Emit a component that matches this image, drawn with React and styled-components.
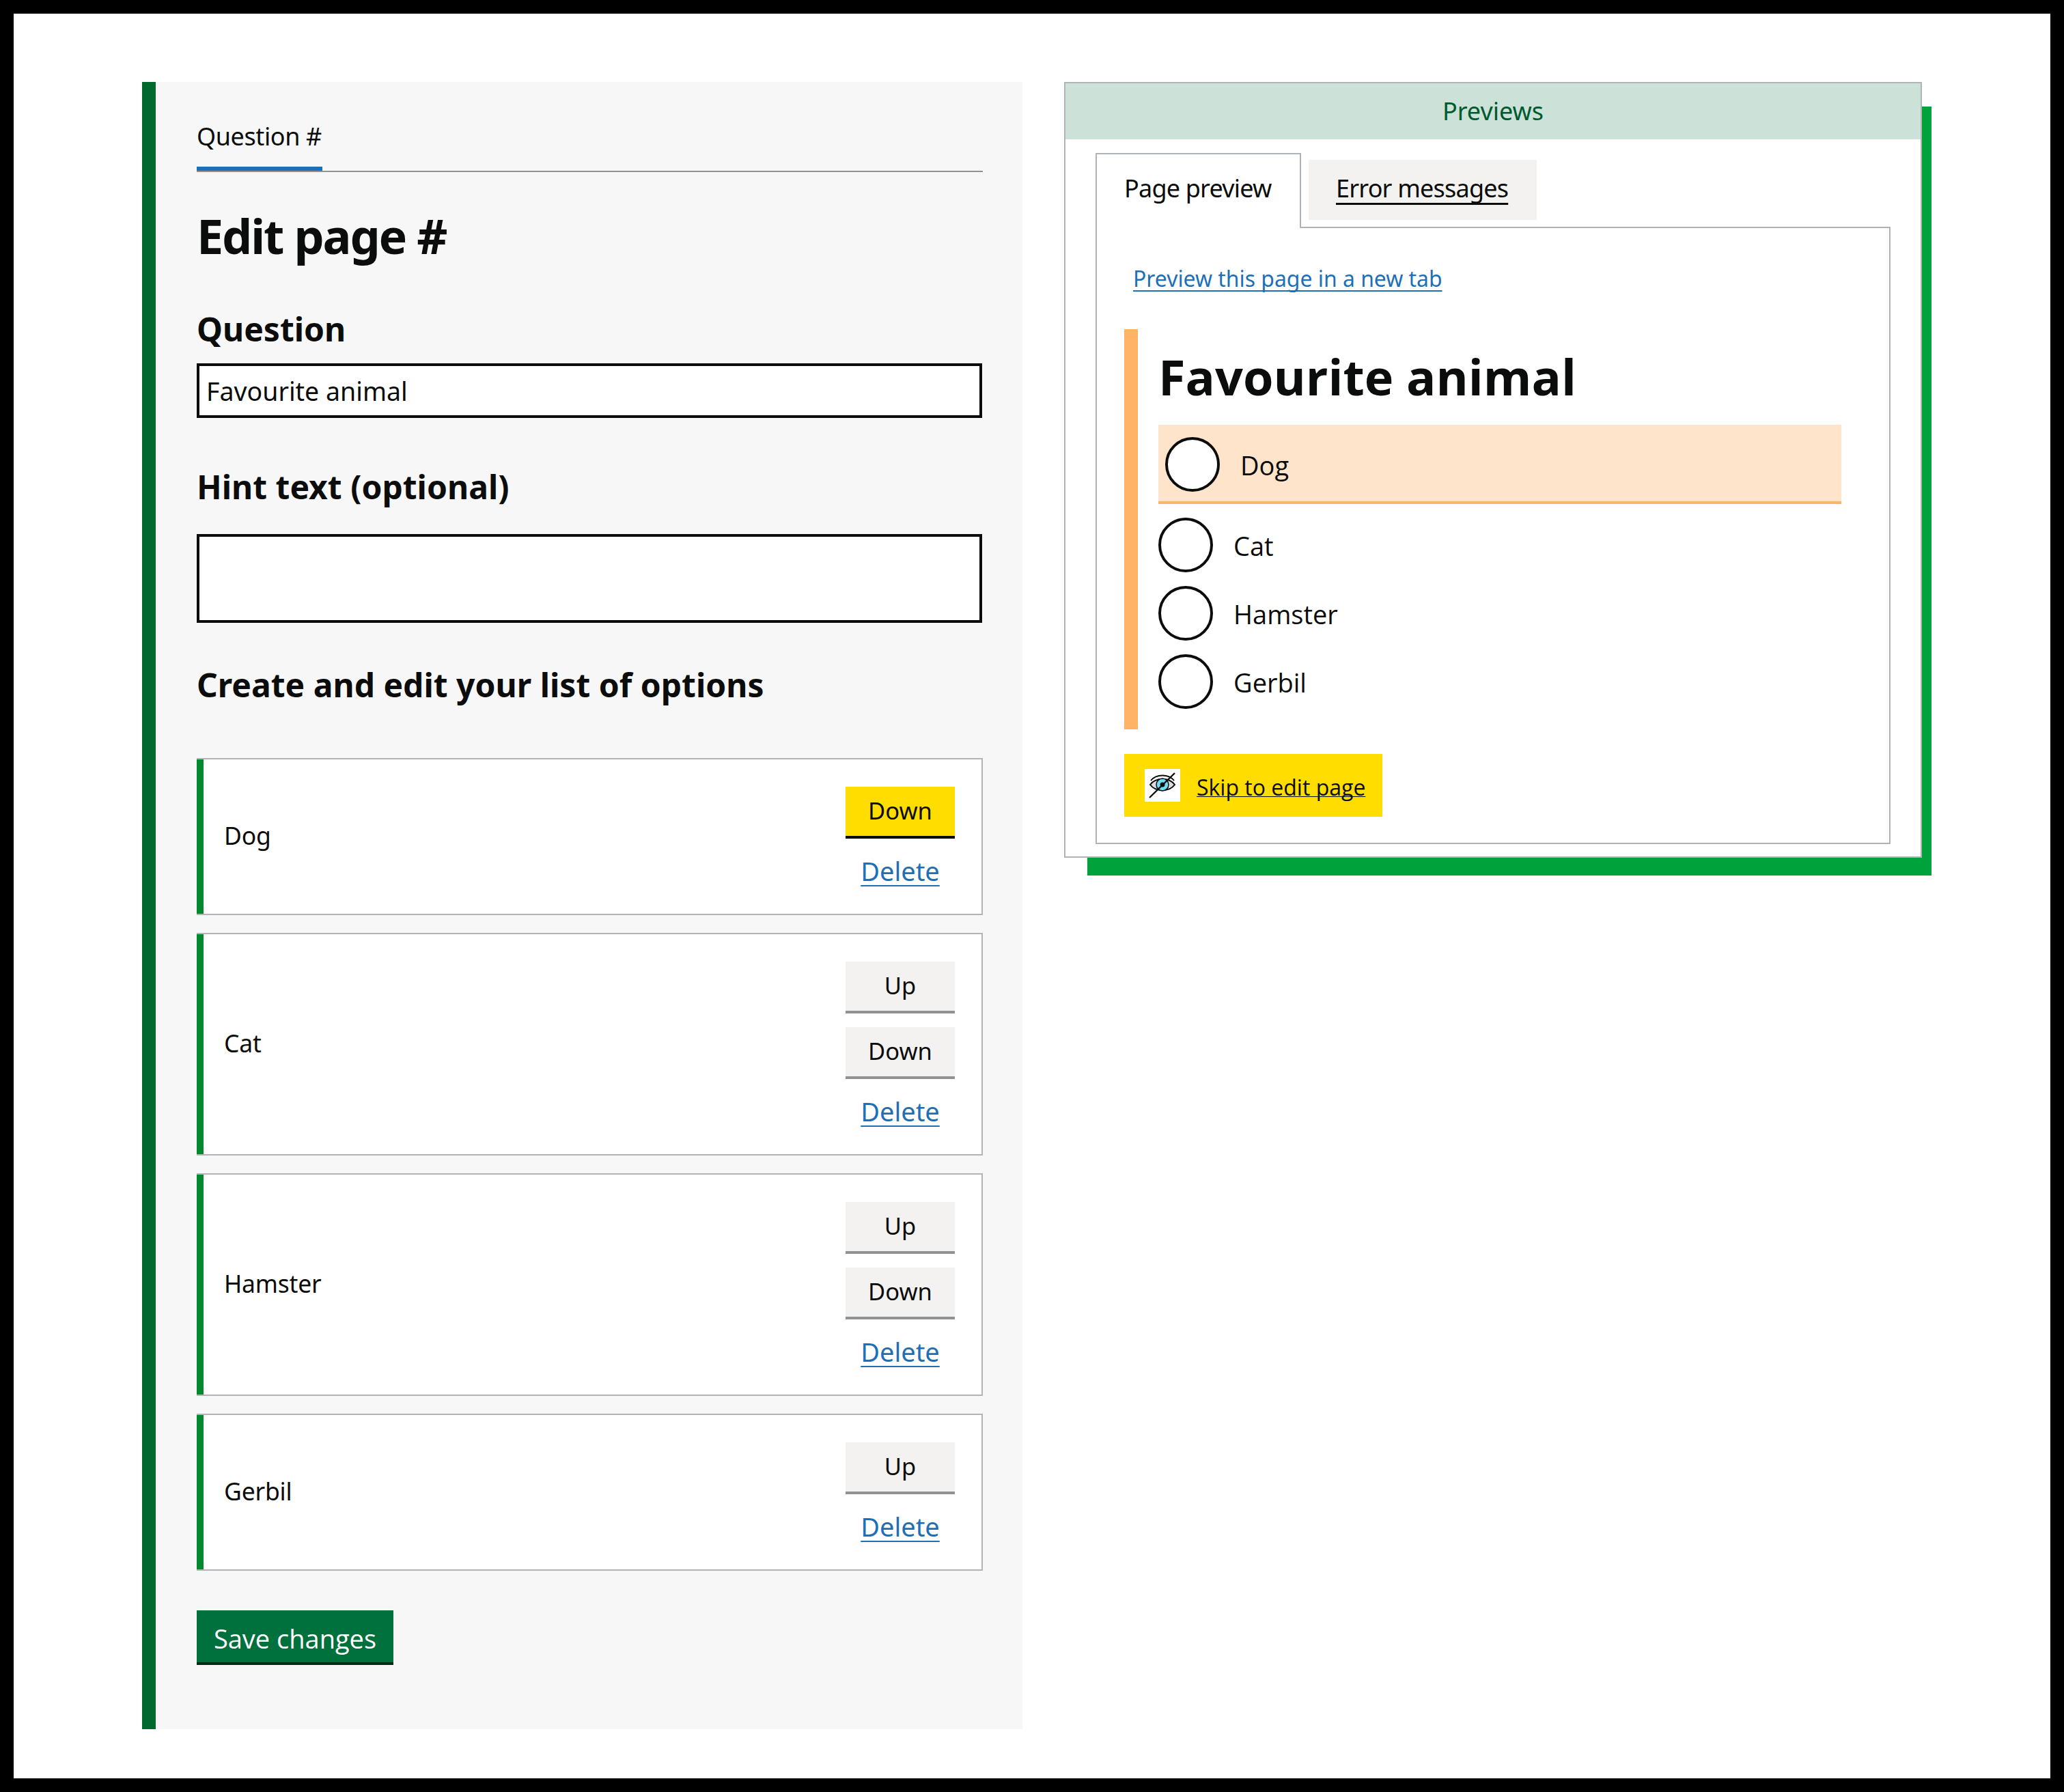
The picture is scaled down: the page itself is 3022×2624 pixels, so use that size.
import React from "react";
import styled, { createGlobalStyle } from "styled-components";

const Global = createGlobalStyle`
  html, body { margin: 0; padding: 0; background: #fff; }
  * { box-sizing: border-box; }
  a { text-decoration-skip-ink: none; }
`;

const Frame = styled.div`
  width: 3022px;
  height: 2624px;
  border: 20px solid #000;
  background: #fff;
  padding: 100px 0 0 188px;
  display: flex;
  align-items: flex-start;
  gap: 61px;
  font-family: "Noto Sans", sans-serif;
  color: #0b0c0c;
`;

const EditorPanel = styled.section`
  width: 1289px;
  height: 2412px;
  background: #f7f7f7;
  border-left: 20px solid #00692e;
  padding: 0 58px 0 60px;
  display: flex;
  flex-direction: column;
`;

const TabBar = styled.div`
  height: 132px;
  border-bottom: 2px solid #929191;
  display: flex;
  align-items: flex-end;
`;

const TabLabel = styled.div`
  width: 184px;
  height: 102px;
  font-size: 36px;
  letter-spacing: -0.4px;
  line-height: 50px;
  padding-top: 27px;
  border-bottom: 6px solid #1d70b8;
  white-space: nowrap;
`;

const PageTitle = styled.h1`
  margin: 48px 0 0;
  font-size: 70px;
  letter-spacing: -2.1px;
  line-height: 90px;
  font-weight: 700;
`;

const FieldLabel = styled.label`
  display: block;
  font-size: 48px;
  font-weight: 700;
  line-height: 64px;
  margin-top: ${(p) => p.$top}px;
`;

const TextBox = styled.div`
  width: 1150px;
  height: ${(p) => p.$height}px;
  margin-top: ${(p) => p.$top}px;
  border: 4px solid #0b0c0c;
  background: #fff;
  padding: 0 10px;
  font-size: 37.5px;
  line-height: 74px;
`;

const OptionList = styled.div`
  display: flex;
  flex-direction: column;
  gap: 26px;
  margin-top: 75px;
`;

const OptionCard = styled.div`
  width: 1151px;
  border: 2px solid #b1b4b6;
  border-left: 0;
  background: #fff;
  display: flex;
  justify-content: space-between;
  align-items: center;
  position: relative;
  padding: 40px 39px 40px 40px;
  &::before {
    content: "";
    position: absolute;
    left: 0;
    top: 0;
    bottom: 0;
    width: 10px;
    background: #00892e;
  }
`;

const OptionName = styled.div`
  font-size: 35.5px;
  letter-spacing: -0.2px;
  line-height: 50px;
  padding-bottom: 5px;
`;

const OptionActions = styled.div`
  width: 160px;
  display: flex;
  flex-direction: column;
  align-items: center;
  gap: 20px;
`;

const MoveButton = styled.button`
  width: 160px;
  height: 76px;
  border: 0;
  padding: 0 0 4px;
  background: ${(p) => (p.$focus ? "#ffdd00" : "#f3f2f1")};
  border-bottom: 4px solid ${(p) => (p.$focus ? "#0b0c0c" : "#929191")};
  font-family: "Noto Sans", sans-serif;
  font-size: 34.5px;
  color: #0b0c0c;
`;

const DeleteLink = styled.a`
  display: block;
  font-size: 38px;
  line-height: 46px;
  padding-top: 4px;
  color: #1d70b8;
  text-decoration: underline;
  text-decoration-thickness: 2px;
  text-underline-offset: 6px;
`;

const SaveButton = styled.button`
  align-self: flex-start;
  margin-top: 58px;
  width: 288px;
  height: 80px;
  border: 0;
  border-bottom: 4px solid #002d18;
  background: #00703c;
  color: #fff;
  font-family: "Open Sans", sans-serif;
  font-size: 38px;
  padding: 6px 0 0;
`;

const PreviewWrap = styled.aside`
  position: relative;
  width: 1256px;
  height: 1136px;
  &::before {
    content: "";
    position: absolute;
    top: 36px;
    left: 34px;
    right: -14px;
    bottom: -26px;
    background: #00a33b;
  }
`;

const PreviewBox = styled.div`
  position: relative;
  height: 100%;
  border: 2px solid #b1b4b6;
  background: #fff;
  display: flex;
  flex-direction: column;
`;

const PreviewHeader = styled.div`
  height: 82px;
  background: #cce2d8;
  color: #005a30;
  font-size: 36px;
  line-height: 82px;
  text-align: center;
`;

const PreviewBody = styled.div`
  padding: 20px 0 0 44px;
  font-size: 36px;
`;

const TabStrip = styled.div`
  display: flex;
  align-items: flex-start;
  gap: 11px;
  position: relative;
  z-index: 1;
  margin-bottom: -2px;
`;

const ActiveTab = styled.div`
  width: 301px;
  height: 110px;
  border: 2px solid #b1b4b6;
  border-bottom: 0;
  background: #fff;
  padding: 0 0 0 40px;
  line-height: 100px;
  letter-spacing: -0.8px;
  white-space: nowrap;
`;

const InactiveTab = styled.a`
  width: 334px;
  height: 88px;
  margin-top: 10px;
  background: #f3f2f1;
  padding-left: 40px;
  line-height: 84px;
  letter-spacing: -0.8px;
  color: #0b0c0c;
  white-space: nowrap;
  text-decoration: underline;
  text-decoration-thickness: 3px;
  text-underline-offset: 8px;
`;

const TabPanel = styled.div`
  width: 1164px;
  height: 904px;
  border: 2px solid #b1b4b6;
  padding: 0 0 0 40px;
  font-family: "Open Sans", sans-serif;
`;

const PreviewLink = styled.a`
  display: block;
  margin: 52px 0 0 13px;
  font-family: "Noto Sans", sans-serif;
  font-size: 31.9px;
  line-height: 44px;
  color: #1d70b8;
  text-decoration: underline;
  text-decoration-thickness: 2px;
  text-underline-offset: 5px;
`;

const QuestionBlock = styled.div`
  margin-top: 52px;
  width: 1050px;
  height: 586px;
  border-left: 20px solid #ffb366;
  padding-left: 30px;
`;

const QuestionTitle = styled.h2`
  margin: 0;
  padding-top: 22px;
  height: 140px;
  font-size: 72px;
  line-height: 94px;
  font-weight: 700;
`;

const FocusRow = styled.div`
  width: 1000px;
  height: 116px;
  background: #ffe4cc;
  border-bottom: 4px solid #ffb366;
  padding: 4px 0 0 10px;
  margin-bottom: 20px;
  display: flex;
  align-items: center;
`;

const RadioRow = styled.div`
  height: 100px;
  display: flex;
  align-items: center;
  padding-bottom: 20px;
`;

const RadioCircle = styled.span`
  width: 80px;
  height: 80px;
  border: 4px solid #0b0c0c;
  border-radius: 50%;
  background: #fff;
  flex: none;
`;

const RadioText = styled.span`
  margin-left: 30px;
  font-size: 38px;
  line-height: 50px;
  position: relative;
  top: 1px;
`;

const SkipBar = styled.div`
  margin-top: 36px;
  width: 378px;
  height: 92px;
  background: #ffdd00;
  display: flex;
  align-items: center;
  padding-left: 30px;
`;

const EyeBox = styled.span`
  width: 52px;
  height: 48px;
  background: #fff;
  display: flex;
  align-items: center;
  justify-content: center;
  flex: none;
`;

const SkipLink = styled.a`
  margin-left: 24px;
  font-size: 32px;
  line-height: 44px;
  color: #0b0c0c;
  white-space: nowrap;
  position: relative;
  top: 3px;
  text-decoration: underline;
  text-decoration-thickness: 1px;
  text-underline-offset: 1px;
`;

const EyeIcon = () => (
  <svg width="40" height="40" viewBox="0 0 40 40" fill="none">
    <path d="M2 19 C10 8 30 8 38 19 C30 30 10 30 2 19 Z" fill="#ddd" stroke="#0b0c0c" strokeWidth="2" />
    <path d="M3 13 C11 3 29 3 37 13" stroke="#0b0c0c" strokeWidth="2" />
    <circle cx="20" cy="19" r="9" fill="#6fdcf5" stroke="#0b0c0c" strokeWidth="1.5" />
    <circle cx="20" cy="19" r="3.5" fill="#0b0c0c" />
    <line x1="38" y1="2" x2="1" y2="38" stroke="#0b0c0c" strokeWidth="2.4" />
  </svg>
);

const options = [
  { name: "Dog", up: false, down: true, focus: true },
  { name: "Cat", up: true, down: true },
  { name: "Hamster", up: true, down: true },
  { name: "Gerbil", up: true, down: false },
];

export default function App() {
  return (
    <>
      <Global />
      <Frame>
        <EditorPanel>
          <TabBar>
            <TabLabel>Question #</TabLabel>
          </TabBar>
          <PageTitle>Edit page #</PageTitle>
          <FieldLabel $top={60}>Question</FieldLabel>
          <TextBox $height={80} $top={18}>Favourite animal</TextBox>
          <FieldLabel $top={69}>Hint text (optional)</FieldLabel>
          <TextBox $height={130} $top={37} />
          <FieldLabel $top={59}>Create and edit your list of options</FieldLabel>
          <OptionList>
            {options.map((o) => (
              <OptionCard key={o.name}>
                <OptionName>{o.name}</OptionName>
                <OptionActions>
                  {o.up && <MoveButton>Up</MoveButton>}
                  {o.down && <MoveButton $focus={o.focus}>Down</MoveButton>}
                  <DeleteLink href="#">Delete</DeleteLink>
                </OptionActions>
              </OptionCard>
            ))}
          </OptionList>
          <SaveButton>Save changes</SaveButton>
        </EditorPanel>
        <PreviewWrap>
          <PreviewBox>
            <PreviewHeader>Previews</PreviewHeader>
            <PreviewBody>
              <TabStrip>
                <ActiveTab>Page preview</ActiveTab>
                <InactiveTab href="#">Error messages</InactiveTab>
              </TabStrip>
              <TabPanel>
                <PreviewLink href="#">Preview this page in a new tab</PreviewLink>
                <QuestionBlock>
                  <QuestionTitle>Favourite animal</QuestionTitle>
                  <FocusRow>
                    <RadioCircle />
                    <RadioText>Dog</RadioText>
                  </FocusRow>
                  {["Cat", "Hamster", "Gerbil"].map((a) => (
                    <RadioRow key={a}>
                      <RadioCircle />
                      <RadioText>{a}</RadioText>
                    </RadioRow>
                  ))}
                </QuestionBlock>
                <SkipBar>
                  <EyeBox><EyeIcon /></EyeBox>
                  <SkipLink href="#">Skip to edit page</SkipLink>
                </SkipBar>
              </TabPanel>
            </PreviewBody>
          </PreviewBox>
        </PreviewWrap>
      </Frame>
    </>
  );
}
